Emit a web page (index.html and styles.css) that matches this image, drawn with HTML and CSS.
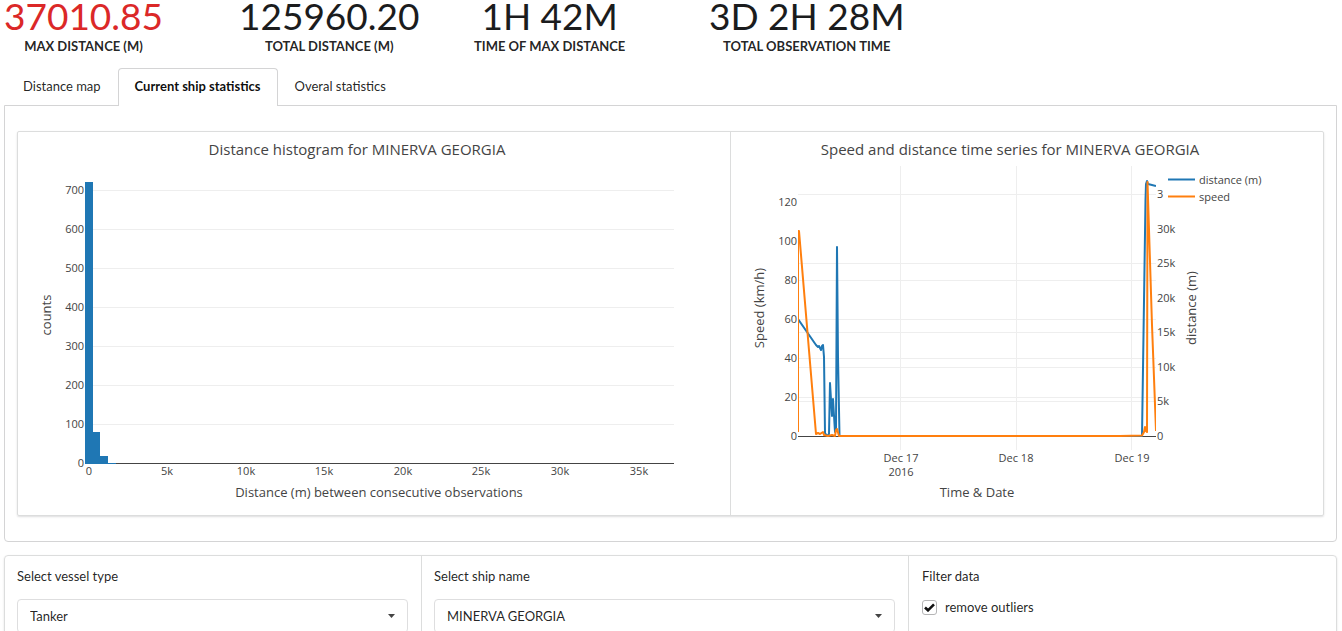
FILE: index.html
```html
<!DOCTYPE html>
<html lang="en">
<head>
<meta charset="utf-8">
<title>Ship statistics</title>
<link rel="stylesheet" href="styles.css">
</head>
<body>
<main class="page">
  <section class="stats">
    <div class="stat"><div class="value red">37010.85</div><div class="caption">MAX DISTANCE (M)</div></div>
    <div class="stat"><div class="value">125960.20</div><div class="caption">TOTAL DISTANCE (M)</div></div>
    <div class="stat"><div class="value">1H 42M</div><div class="caption">TIME OF MAX DISTANCE</div></div>
    <div class="stat"><div class="value">3D 2H 28M</div><div class="caption">TOTAL OBSERVATION TIME</div></div>
  </section>

  <nav class="tabs">
    <a class="tab" href="#map">Distance map</a>
    <a class="tab active" href="#ship">Current ship statistics</a>
    <a class="tab" href="#overall">Overal statistics</a>
  </nav>

  <section class="panel">
    <div class="segments charts">
      <div class="chart">
        <svg class="plot" viewBox="18 132 712 383" role="img" aria-label="Distance histogram">
          <text class="title" x="357" y="155">Distance histogram for MINERVA GEORGIA</text>
          <path class="grid" d="M85 190.5H674M85 229.5H674M85 268.5H674M85 307.5H674M85 346.5H674M85 385.5H674M85 424.5H674"/>
          <path class="axis" d="M85 463.5H674"/>
          <path class="bars" d="M85 182H93V432H100V456H108V463H116V464H85Z"/>
          <g class="tick end">
            <text x="84" y="194">700</text><text x="84" y="233">600</text><text x="84" y="272">500</text><text x="84" y="311">400</text><text x="84" y="350">300</text><text x="84" y="389">200</text><text x="84" y="428">100</text><text x="84" y="467">0</text>
          </g>
          <g class="tick mid">
            <text x="89" y="475">0</text><text x="167" y="475">5k</text><text x="246" y="475">10k</text><text x="324" y="475">15k</text><text x="403" y="475">20k</text><text x="481" y="475">25k</text><text x="560" y="475">30k</text><text x="639" y="475">35k</text>
          </g>
          <text class="label" x="379" y="497">Distance (m) between consecutive observations</text>
          <text class="label" transform="translate(51 315) rotate(-90)">counts</text>
        </svg>
      </div>
      <div class="chart">
        <svg class="plot" viewBox="731 132 592 383" role="img" aria-label="Speed and distance time series">
          <text class="title" x="1010" y="155">Speed and distance time series for MINERVA GEORGIA</text>
          <path class="grid" d="M900.5 166V450M1016.5 166V450M1131.5 166V450M798 194.5H1156M798 263.5H1156M798 280.5H1156M798 319.5H1156M798 332.5H1156M798 358.5H1156M798 367.5H1156M798 397.5H1156M798 401.5H1156"/>
          <path class="axis" d="M798 436.5H1156"/>
          <svg x="798" y="166" width="358" height="284" viewBox="798 166 358 284">
            <path class="line blue" d="M798 319L816 345L818 347L819 346L820 348L821 350L822 346L823 345L824 357L825 433L827 436L829 434L830 383L832 416L833 399L835 432L836 430L837 247L838 357L839.5 436H1142L1145.5 200L1146 184L1147 181L1148 184L1156 186"/>
            <path class="line orange" d="M798 432V231L799 231L816 434L818 433L820 434L823 432L824 435L828 436L832 435L835 436L836 430L837 429L839 436H1120L1142 435.5L1144 432L1145 427L1146 431L1147 432L1147.5 182L1152 325L1156 431"/>
          </svg>
          <g class="tick end">
            <text x="797" y="206">120</text><text x="797" y="245">100</text><text x="797" y="284">80</text><text x="797" y="323">60</text><text x="797" y="362">40</text><text x="797" y="401">20</text><text x="797" y="440">0</text>
          </g>
          <g class="tick">
            <text x="1157" y="198">3</text><text x="1157" y="233">30k</text><text x="1157" y="267">25k</text><text x="1157" y="302">20k</text><text x="1157" y="336">15k</text><text x="1157" y="371">10k</text><text x="1157" y="405">5k</text><text x="1157" y="440">0</text>
            <text x="1199" y="184">distance (m)</text><text x="1199" y="201">speed</text>
          </g>
          <g class="tick mid">
            <text x="901" y="462">Dec 17</text><text x="901" y="476">2016</text><text x="1016" y="462">Dec 18</text><text x="1132" y="462">Dec 19</text>
          </g>
          <path class="line blue" d="M1168 179.5H1195"/>
          <path class="line orange" d="M1168 196.5H1195"/>
          <text class="label" x="977" y="497">Time &amp; Date</text>
          <text class="label" transform="translate(764 308) rotate(-90)">Speed (km/h)</text>
          <text class="label" transform="translate(1196 308) rotate(-90)">distance (m)</text>
        </svg>
      </div>
    </div>
  </section>

  <form class="segments filters">
    <div class="field">
      <label for="type">Select vessel type</label>
      <select id="type"><option>Tanker</option></select>
    </div>
    <div class="field">
      <label for="ship">Select ship name</label>
      <select id="ship"><option>MINERVA GEORGIA</option></select>
    </div>
    <div class="field">
      <span class="heading">Filter data</span>
      <label class="check"><input type="checkbox" checked><svg class="mark" viewBox="0 0 11 9" aria-hidden="true"><path d="M1 4.5L4 7.3L10 1.3"/></svg><span>remove outliers</span></label>
    </div>
  </form>
</main>
</body>
</html>
```
FILE: styles.css
```css
* { box-sizing: border-box; }
body {
  margin: 0;
  background: #fff;
  color: rgba(0, 0, 0, .87);
  font: 13px/18px Lato, "Liberation Sans", sans-serif;
}
.page { padding: 0 5px 0 4px; }

.stats {
  display: grid;
  grid-template-columns: repeat(4, 235px);
  height: 68px;
}
.stat { justify-self: start; text-align: center; }
.value { font-size: 37px; line-height: 32px; color: #1b1c1d; }
.value.red { color: #db2828; }
.caption { font-weight: 700; line-height: 28px; }

.tabs { display: flex; height: 38px; margin-bottom: -1px; padding-left: 2px; }
.tab {
  padding: 8px 16px;
  border: 1px solid transparent;
  border-bottom: 0;
  color: rgba(0, 0, 0, .87);
  text-decoration: none;
}
.tab.active {
  z-index: 1;
  border-color: #d4d4d5;
  border-radius: 4px 4px 0 0;
  background: #fff;
  color: rgba(0, 0, 0, .95);
  font-weight: 700;
}
.panel {
  padding: 25px 12px;
  border: 1px solid #d4d4d5;
  border-radius: 0 0 4px 4px;
}

.segments {
  display: grid;
  border: 1px solid #dcdddd;
  border-radius: 4px;
  box-shadow: 0 1px 2px rgba(34, 36, 38, .15);
}
.segments > * + * { border-left: 1px solid #dcdddd; }
.charts { grid-template-columns: 712fr 593fr; border-radius: 2px; }
.plot { display: block; width: 100%; height: auto; }
.plot text { font-family: "Open Sans", sans-serif; fill: #444; }
.plot .title { font-size: 15px; text-anchor: middle; }
.plot .label { font-size: 13px; text-anchor: middle; }
.tick { font-size: 11px; }
.tick.end { text-anchor: end; }
.tick.mid { text-anchor: middle; }
.grid { stroke: #eee; }
.axis { stroke: #444; }
.bars { fill: #1f77b4; }
.line { fill: none; stroke-width: 2; stroke-linejoin: round; }
.blue { stroke: #1f77b4; }
.orange { stroke: #ff7f0e; }

.filters {
  grid-template-columns: 416fr 487fr 428fr;
  margin-top: 13px;
}
.field { padding: 11px 13px 12px 12px; }
.field:last-child { padding-left: 13px; }
.field > label, .heading { display: block; }
select {
  display: block;
  width: 100%;
  height: 34px;
  margin-top: 14px;
  padding: 0 12px;
  appearance: none;
  border: 1px solid #dededf;
  border-radius: 4px;
  background: #fff url("data:image/svg+xml,%3Csvg xmlns='http://www.w3.org/2000/svg' width='7' height='4'%3E%3Cpath d='M0 0H7L3.5 4Z' fill='%23444'/%3E%3C/svg%3E") no-repeat right 12px center;
  color: rgba(0, 0, 0, .87);
  font: inherit;
}
.field > .check {
  display: grid;
  grid-template-columns: 15px auto;
  justify-content: start;
  align-items: center;
  column-gap: 8px;
  margin-top: 13px;
}
.check input {
  grid-area: 1 / 1;
  width: 15px;
  height: 15px;
  margin: 0;
  appearance: none;
  border: 1px solid #b5b5b6;
  border-radius: 3px;
}
.mark {
  grid-area: 1 / 1;
  justify-self: center;
  width: 11px;
  height: 9px;
  fill: none;
  stroke: #111;
  stroke-width: 2.6;
}
```
